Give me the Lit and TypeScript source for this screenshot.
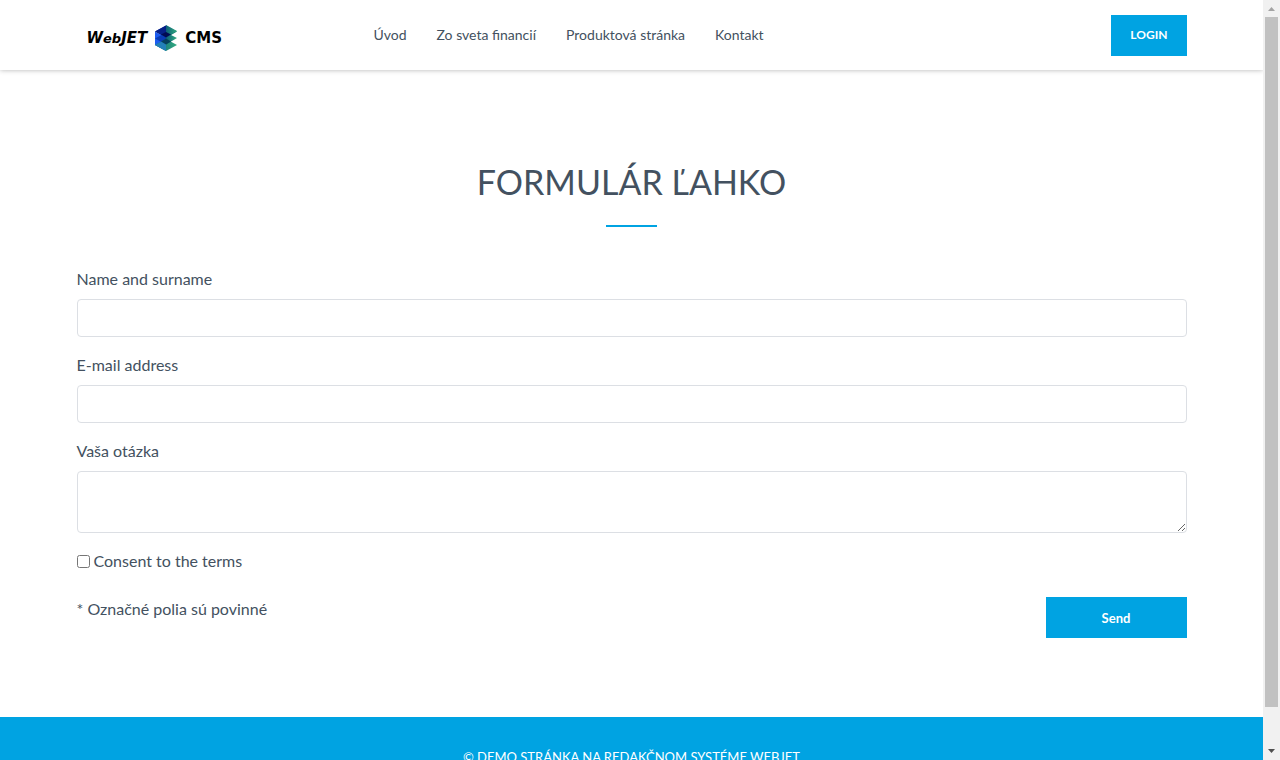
import { LitElement, html, css, svg } from "lit";
import { customElement } from "lit/decorators.js";

const NAV = ["Úvod", "Zo sveta financií", "Produktová stránka", "Kontakt"];

@customElement("site-logo")
class SiteLogo extends LitElement {
  static styles = css`
    :host {
      display: block;
    }
    .logo {
      display: flex;
      align-items: center;
      gap: 7px;
      font: 700 15px/28px "DejaVu Sans", sans-serif;
      color: #000;
      text-decoration: none;
    }
    .word {
      font-style: italic;
    }
    .small {
      font-size: 13px;
    }
    .mark {
      display: block;
      width: 24px;
      height: 28px;
    }
  `;
  // One folded sheet of the stack: dark left half, green right half.
  private layer(y: number) {
    return svg`<path d="M1 ${y}L12 ${y - 6}V${y + 6.5}Z" fill="#0a2fa8"/>
      <path d="M12 ${y - 6}L23 ${y}L12 ${y + 6.5}Z" fill="#17786f"/>`;
  }
  render() {
    return html`<a class="logo" href="#">
      <span class="word">W<span class="small">eb</span>JET</span>
      <svg class="mark" viewBox="0 0 24 28" aria-hidden="true">
        <defs>
          <linearGradient id="left" x1="0" y1="0" x2="0" y2="1">
            <stop offset="0" stop-color="#0b2f9c" />
            <stop offset=".55" stop-color="#1f62f0" />
            <stop offset="1" stop-color="#2fa0a0" />
          </linearGradient>
          <linearGradient id="right" x1="0" y1="0" x2="1" y2="0">
            <stop offset="0" stop-color="#0d5f78" />
            <stop offset="1" stop-color="#33ad80" />
          </linearGradient>
        </defs>
        <path d="M1 8L12 14V27L1 21Z" fill="url(#left)" />
        <path d="M1 21L12 15L23 21L12 27Z" fill="url(#right)" />
        ${this.layer(7.5)}
        <path d="M12 1L23 7L12 13.500Z" fill="url(#right)" />
        <path d="M12 8.500L23 14L12 20.500Z" fill="url(#right)" />
        <path d="M1 7.500L12 1.500V13.500Z" fill="#061f86" />
        <path d="M1 8V20.500L12 14.500V13.500Z" fill="#1c5cf0" />
        <path d="M1 14.500L12 8.500V20.500Z" fill="#0a3cb4" />
        <path d="M1 21L12 15V27Z" fill="#2380b8" />
        <path d="M12 8L17 10.500L12 13.500L7 10.500Z" fill="#020b52" />
        <path d="M12 14.500L17 17.500L12 20.500L7 17.500Z" fill="#06405e" />
      </svg>
      <span>CMS</span>
    </a>`;
  }
}

@customElement("page-scrollbar")
class PageScrollbar extends LitElement {
  static styles = css`
    :host {
      display: flex;
      flex-direction: column;
      background: #f1f1f1;
    }
    .arrow {
      display: block;
      width: 17px;
      height: 17px;
    }
    .track {
      flex: 1;
      padding: 0 2px;
    }
    .thumb {
      height: 95%;
      background: #c1c1c1;
    }
  `;
  render() {
    return html`<svg class="arrow" viewBox="0 0 17 17"><path d="M5 11L8.500 7L12 11Z" fill="#a3a3a3" /></svg>
      <div class="track"><div class="thumb"></div></div>
      <svg class="arrow" viewBox="0 0 17 17"><path d="M5 6L8.500 10L12 6Z" fill="#505050" /></svg>`;
  }
}

@customElement("app-root")
class AppRoot extends LitElement {
  static styles = css`
    :host {
      display: grid;
      grid-template-columns: minmax(0, 1fr) 17px;
      height: 100vh;
      overflow: hidden;
      font: 400 16px/24px Lato, "Open Sans", sans-serif;
      color: #435160;
      background: #fff;
    }
    * {
      box-sizing: border-box;
    }
    .page {
      overflow: hidden;
    }
    .container {
      max-width: 1140px;
      margin: 0 auto;
      padding: 0 15px;
    }
    .header {
      box-shadow: 0 0 5px rgba(0, 0, 0, 0.3);
    }
    .bar {
      display: grid;
      grid-template-columns: 287px 1fr auto;
      align-items: center;
      min-height: 70px;
    }
    .brand {
      padding: 6px 10px 0;
    }
    .nav {
      display: flex;
      gap: 30px;
      padding-left: 10px;
      font-size: 14px;
    }
    .nav a {
      color: inherit;
      text-decoration: none;
    }
    .button {
      height: 41px;
      padding: 0 19px;
      border: 0;
      background: #00a3e2;
      color: #fff;
      font: 700 12px/20px Lato, "Open Sans", sans-serif;
    }
    .title {
      margin: 0;
      padding-top: 88px;
      font-size: 34px;
      font-weight: 400;
      line-height: 48px;
      text-align: center;
      text-transform: uppercase;
    }
    .rule {
      width: 51px;
      height: 2px;
      margin: 19px auto 40px;
      border: 0;
      background: #00a3e2;
    }
    .group {
      display: flex;
      flex-direction: column;
      gap: 8px;
      margin-bottom: 16px;
    }
    .control {
      display: block;
      width: 100%;
      height: 38px;
      padding: 6px 12px;
      border: 1px solid #dcdfe4;
      border-radius: 4px;
      background: #fff;
      font: inherit;
      color: inherit;
    }
    .area {
      height: 62px;
      resize: vertical;
    }
    .consent {
      display: flex;
      align-items: center;
      gap: 4px;
    }
    .check {
      width: 13px;
      height: 13px;
      margin: 0;
    }
    .actions {
      display: flex;
      justify-content: space-between;
      align-items: flex-start;
      padding: 24px 0 79px;
    }
    .send {
      width: 141px;
      font-size: 13px;
    }
    .footer {
      padding: 28px 15px;
      background: #00a3e2;
      color: #fff;
      font-size: 13px;
      text-align: center;
      text-transform: uppercase;
    }
  `;
  render() {
    return html`<div class="page">
        <header class="header">
          <div class="container bar">
            <site-logo class="brand"></site-logo>
            <nav class="nav">${NAV.map((n) => html`<a href="#">${n}</a>`)}</nav>
            <button class="button" type="button">LOGIN</button>
          </div>
        </header>
        <main class="container">
          <h1 class="title">Formulár ľahko</h1>
          <hr class="rule" />
          <form @submit=${(e: Event) => e.preventDefault()}>
            <div class="group">
              <label for="name">Name and surname</label>
              <input class="control" id="name" type="text" />
            </div>
            <div class="group">
              <label for="email">E-mail address</label>
              <input class="control" id="email" type="email" />
            </div>
            <div class="group">
              <label for="question">Vaša otázka</label>
              <textarea class="control area" id="question"></textarea>
            </div>
            <div class="consent">
              <input class="check" id="terms" type="checkbox" />
              <label for="terms">Consent to the terms</label>
            </div>
            <div class="actions">
              <span>* Označné polia sú povinné</span>
              <button class="button send" type="submit">Send</button>
            </div>
          </form>
        </main>
        <footer class="footer">© Demo stránka na redakčnom systéme WebJET</footer>
      </div>
      <page-scrollbar aria-hidden="true"></page-scrollbar>`;
  }
}
